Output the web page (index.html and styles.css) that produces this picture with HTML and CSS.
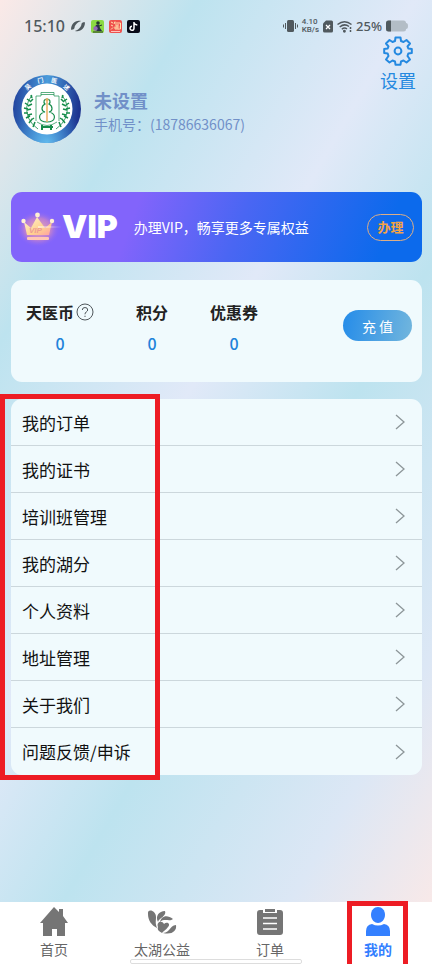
FILE: index.html
```html
<!DOCTYPE html>
<html lang="zh-CN">
<head>
<meta charset="utf-8">
<meta name="viewport" content="width=device-width, initial-scale=1">
<title>我的</title>
<link rel="stylesheet" href="styles.css">
</head>
<body>
<header class="status">
  <div class="status-group">
    <span class="time">15:10</span>
    <svg class="swirl" width="14" height="14" viewBox="0 0 14 14" fill="#50595e"><g transform="rotate(12 7 7)"><path d="M1 12C-.5 7 3 1 9 1.500C6 3 3.500 7 4 9.500C4.200 11 2.500 12 1 12Z"/><path d="M13 2C14.500 7 11 13 5 12.500C8 11 10.500 7 10 4.500C9.800 3 11.500 2 13 2Z"/></g></svg>
    <svg width="13" height="13" viewBox="0 0 13 13"><rect width="13" height="13" rx="2" fill="#8bd943"/><circle cx="7" cy="3" r="1.800" fill="#24352f"/><path d="M5 5L8 4.500L9 8L11 11H6L3 9Z" fill="#283049"/><circle cx="4.500" cy="8.500" r="2.200" fill="#9468b6"/><path d="M2 12H12M8 6L11 5" stroke="#28382b"/></svg>
    <svg width="13" height="13" viewBox="0 0 13 13"><rect width="13" height="13" rx="2" fill="#ef514e"/><path d="M2 2L4 3M2 5L4 6M2 9.500L4 7.500M6 1.500L5 4M5.500 3H11.500V9H9.500M6 5H10M5.500 7H10.500M8 5V9M6 7V9H10" fill="none" stroke="#ffe0ad"/><path d="M2 11.500H11" stroke="#ffc4bd"/></svg>
    <svg width="13" height="13" viewBox="0 0 13 13"><rect width="13" height="13" rx="2" fill="#080b18"/><path d="M7 2V8.200A2 2 0 1 1 5 6.300M7 2C7.200 4 8.500 4.900 10.300 5" fill="none" stroke="#fff" stroke-width="1.500"/></svg>
  </div>
  <div class="status-group status-right">
    <svg width="15" height="14" viewBox="0 0 15 14"><rect x="4" y="1" width="7" height="12" rx="1.500" fill="#50595e"/><path d="M2.500 4V10M.5 5.500V8.500M12.500 4V10M14.500 5.500V8.500" stroke="#50595e"/></svg>
    <span class="speed"><span>4.10</span><span>KB/s</span></span>
    <svg width="10" height="13" viewBox="0 0 10 13"><path d="M3 .5H8.500Q10 .5 10 2V11Q10 12.500 8.500 12.500H1.500Q0 12.500 0 11V3.500Z" fill="#50595e"/><path d="M3 5L7 9M7 5L3 9" stroke="#fff" stroke-width="1.300"/></svg>
    <svg width="15" height="13" viewBox="0 0 15 13" fill="none" stroke="#50595e" stroke-width="1.500"><path d="M.5 4.500Q7.500-1 14.500 4.500M2.700 7Q7.500 3 12 6.500M4.800 9.300Q7.500 7 10 9"/><circle cx="7.400" cy="11.300" r=".7" fill="#50595e"/><path d="M13.500 7V9M13.500 10V12"/></svg>
    <span class="battery-text">25%</span>
    <svg width="22" height="12" viewBox="0 0 22 12"><rect y=".5" width="20" height="11" rx="2.500" fill="#b3bdc6"/><path d="M5 .5H2.500Q0 .5 0 3V9Q0 11.500 2.500 11.500H5Z" fill="#50595e"/><path d="M20 3Q22 3 22 6Q22 9 20 9Z" fill="#b3bdc6"/></svg>
  </div>
</header>

<main class="content">
  <section class="profile">
    <svg class="avatar" width="68" height="68" viewBox="0 0 68 68" role="img" aria-label="头像">
      <defs>
        <linearGradient id="ring" x1="0" y1=".1" x2="1" y2=".2"><stop offset="0" stop-color="#203f9b"/><stop offset=".5" stop-color="#4a9cdb"/><stop offset="1" stop-color="#1d3490"/></linearGradient>
        <radialGradient id="shine" cx=".5" cy="1" r=".55"><stop stop-color="#62baed"/><stop offset="1" stop-color="#3477c8" stop-opacity="0"/></radialGradient>
        <path id="arc" d="M7 34A27 27 0 0 1 61 34"/>
      </defs>
      <circle cx="34" cy="34" r="34" fill="url(#ring)"/><circle cx="34" cy="34" r="34" fill="url(#shine)"/>
      <circle cx="34" cy="34" r="25.500" fill="#fff"/>
      <text class="seal-text"><textPath href="#arc" startOffset="20">吴</textPath></text>
      <text class="seal-text"><textPath href="#arc" startOffset="33">门</textPath></text>
      <text class="seal-text"><textPath href="#arc" startOffset="46">医</textPath></text>
      <text class="seal-text"><textPath href="#arc" startOffset="59">述</textPath></text>
      <g fill="none" stroke="#168c4b">
        <path stroke-width=".7" d="M23 46V21H28V17.500H41V21H46V46M28 19.500H41M24 47Q34 54 44 47"/>
        <path stroke-width="1.200" d="M34 24C31 24 30 27 32 29C28 31 28 36 32 37C24 39 25 47 34 47C43 47 44 39 36 37C40 36 40 31 36 29C38 27 37 24 34 24Z"/>
        <path stroke-width="2" d="M28 52H40M29 50V55M38 50V55"/>
        <path stroke-width=".8" d="M19 20Q10 32 16 44Q19 50 25 54M49 20Q58 32 52 44Q49 50 43 54"/>
        <path stroke-width="1.500" d="M18 20L19 23M14 24L17 26M12 28L15 30M11 33L15 34M11 38L15 38M13 43L17 41M16 48L19 44M20 52L22 47M20 24L17 27M19 29L15 31M18 34L14 35M19 39L15 40M21 43L18 45M50 20L49 23M54 24L51 26M56 28L53 30M57 33L53 34M57 38L53 38M55 43L51 41M52 48L49 44M48 52L46 47M48 24L51 27M49 29L53 31M50 34L54 35M49 39L53 40M47 43L50 45"/>
      </g>
      <path d="M34 23V47M32.500 25H35.500" stroke="#e9ad62" stroke-width="1.500"/>
    </svg>
    <div class="identity">
      <h1>未设置</h1>
      <p>手机号：(18786636067)</p>
    </div>
    <button class="settings" type="button">
      <svg width="30" height="30" viewBox="0 0 30 30" fill="none" stroke="#2589e0" stroke-width="2" stroke-linejoin="round"><path d="M12.500 1.500H17.500L18 5L20.500 6L23.500 4L27 7.500L24.500 10.500L25.300 12.500L28.800 13V17L25.300 17.500L24.500 20L27 23.500L23.500 26.500L20.500 24.500L18 25.500L17.500 28.700H12.500L12 25.500L9.500 24.500L6.500 26.500L3 23.500L5.500 20L4.700 17.500L1.200 17V13L4.700 12.500L5.500 10.500L3 7.500L6.500 4L9.500 6L12 5Z"/><circle cx="15" cy="15" r="3.400"/></svg>
      <span>设置</span>
    </button>
  </section>

  <section class="vip">
    <svg class="crown" width="46" height="40" viewBox="0 0 46 40">
      <defs><radialGradient id="glow"><stop stop-color="#ffc29a" stop-opacity=".9"/><stop offset=".6" stop-color="#e993b5" stop-opacity=".55"/><stop offset="1" stop-color="#8668fa" stop-opacity="0"/></radialGradient><linearGradient id="gold" x2="1" y2="1"><stop stop-color="#fff3d5"/><stop offset=".6" stop-color="#ffd28f"/><stop offset="1" stop-color="#ff9fa5"/></linearGradient></defs>
      <ellipse cx="22" cy="22" rx="22" ry="18" fill="url(#glow)"/>
      <path d="M8 15L15 21L21 10L29 21L36 15L33 28H11Z" fill="url(#gold)"/><rect x="11" y="30" width="22" height="3" rx="1" fill="#ffc7b5"/>
      <g fill="#fff0d2"><circle cx="7.500" cy="14" r="2.200"/><circle cx="21.500" cy="8" r="2.400"/><circle cx="36" cy="14" r="2.200"/></g>
      <text class="crown-text" x="13" y="26">VIP</text>
      <path d="M22 19.500L46 20L22 20.500Z" fill="#fff"/>
    </svg>
    <strong class="vip-mark">VIP</strong>
    <span class="vip-copy">办理VIP，畅享更多专属权益</span>
    <button class="apply" type="button">办理</button>
  </section>

  <section class="wallet">
    <dl class="balances">
      <div><dt>天医币<svg width="18" height="18" viewBox="0 0 18 18" fill="none" stroke="#50575b"><circle cx="9" cy="9" r="8"/><path d="M6.300 7Q6.300 4.500 9 4.500Q11.700 4.500 11.700 7Q11.700 8 10.200 9Q9 9.800 9 11.300M9 12.700V14"/></svg></dt><dd>0</dd></div>
      <div><dt>积分</dt><dd>0</dd></div>
      <div><dt>优惠券</dt><dd>0</dd></div>
    </dl>
    <button class="recharge" type="button">充 值</button>
  </section>

  <div class="menu-area">
    <nav class="menu" aria-label="个人中心">
      <a href="#orders">我的订单<svg class="chevron" viewBox="0 0 10 16"><path d="M1 1L9 8L1 15"/></svg></a>
      <a href="#certificates">我的证书<svg class="chevron" viewBox="0 0 10 16"><path d="M1 1L9 8L1 15"/></svg></a>
      <a href="#classes">培训班管理<svg class="chevron" viewBox="0 0 10 16"><path d="M1 1L9 8L1 15"/></svg></a>
      <a href="#points">我的湖分<svg class="chevron" viewBox="0 0 10 16"><path d="M1 1L9 8L1 15"/></svg></a>
      <a href="#profile">个人资料<svg class="chevron" viewBox="0 0 10 16"><path d="M1 1L9 8L1 15"/></svg></a>
      <a href="#address">地址管理<svg class="chevron" viewBox="0 0 10 16"><path d="M1 1L9 8L1 15"/></svg></a>
      <a href="#about">关于我们<svg class="chevron" viewBox="0 0 10 16"><path d="M1 1L9 8L1 15"/></svg></a>
      <a href="#feedback">问题反馈/申诉<svg class="chevron" viewBox="0 0 10 16"><path d="M1 1L9 8L1 15"/></svg></a>
    </nav>
    <div class="marker marker-menu"></div>
  </div>
</main>

<nav class="tabs" aria-label="主导航">
  <a href="#home"><svg width="30" height="30" viewBox="0 0 30 30" fill="#757575"><path d="M15 0L20 5V2H24V9L29 16H26V29H18V22H13V29H4V16H1Z"/></svg><span>首页</span></a>
  <a href="#charity"><svg width="30" height="30" viewBox="0 0 30 30" fill="#757575"><path d="M1 7C0 1 9 3 9 10C9 15 8 15 10 21C4 18 1 13 1 7Z"/><path d="M11 15C8 9 12 4 18 4C20 9 12 11 11 15Z"/><path d="M13 15C14 9 20 7 26 12C23 15 17 11 13 15Z"/><path d="M11 20C9 15 15 13 17 17C20 14 24 17 21 20C19 23 16 24 15 26C12 24 10 23 11 20Z"/><path d="M29 18C30 24 25 28 16 26C24 25 22 19 29 18Z"/></svg><span>太湖公益</span></a>
  <a href="#order-list"><svg width="30" height="30" viewBox="0 0 30 30"><path d="M5 3H8V6H22V3H25Q28 3 28 6V25Q28 28 25 28H5Q2 28 2 25V6Q2 3 5 3Z" fill="#757575"/><path d="M10 2H20V5H10Z" fill="#757575"/><path d="M8 11H22M8 16.500H22M8 22H22" stroke="#fff" stroke-width="1.500"/></svg><span>订单</span></a>
  <a class="active" href="#me" aria-current="page"><svg width="30" height="30" viewBox="0 0 30 30" fill="#3480ff"><path d="M15 0C19 0 22 3 22 8C22 13 18 16 15 16C12 16 8 13 8 8C8 3 11 0 15 0Z"/><path d="M3 29V24Q3 18 9 17Q15 20 21 17Q27 18 27 24V29Z"/></svg><span>我的</span><i class="marker marker-tab"></i></a>
  <div class="home-indicator"></div>
</nav>
</body>
</html>
```

FILE: styles.css
```css
* { box-sizing: border-box; }

body {
  margin: 0;
  min-height: 100vh;
  display: flex;
  flex-direction: column;
  overflow-x: hidden;
  font-family: "Noto Sans CJK SC", sans-serif;
  color: #111;
  background: linear-gradient(120deg, #fbe9e7 0%, #bde3ef 20%, #e1e9f8 42%, #bde3ef 59%, #dce7f5 82%, #fbe9e7 98%);
}

button { font: inherit; padding: 0; border: 0; background: none; cursor: pointer; }
a { color: inherit; text-decoration: none; }
h1, p, dl, dd { margin: 0; }
svg { flex: none; }

.status {
  height: 36px;
  padding: 16px 24px 0;
  display: flex;
  justify-content: space-between;
  color: #50595e;
}
.status-group { height: 20px; display: flex; align-items: center; gap: 5px; }
.status-right { gap: 4px; }
.time { font: 500 16px/20px "Noto Sans", sans-serif; }
.swirl { margin: 0 1px; }
.speed { display: flex; flex-direction: column; font: 500 8px/8px Roboto, sans-serif; }
.speed span { height: 8px; }
.battery-text { font: 500 13px/20px "Noto Sans", sans-serif; }

.content { flex: 1; padding: 0 10px 0 11px; }

.profile { display: flex; align-items: flex-start; height: 156px; padding: 0 6px 0 2px; }
.avatar { margin-top: 39px; }
.seal-text { font-size: 6px; font-weight: 700; fill: #fff; }
.identity { flex: 1; margin: 52px 0 0 13px; color: #7190c8; }
.identity h1 { font-size: 18px; line-height: 24px; }
.identity p { font-size: 14px; line-height: 24px; }
.settings { display: flex; flex-direction: column; align-items: center; color: #2589e0; font-size: 18px; line-height: 28px; }

.vip {
  height: 70px;
  padding: 0 8px 0 5px;
  display: flex;
  align-items: center;
  border-radius: 11px;
  color: #fff;
  background: linear-gradient(110deg, #8264fb 0%, #8264fb 30%, #4a66f3 55%, #0c6aec 90%);
}
.crown-text { font: italic 700 8px "Liberation Sans", sans-serif; fill: #ed9b96; }
.vip-mark { font: 900 32px/40px Inter, sans-serif; }
.vip-copy { flex: 1; margin-left: 16px; font-size: 14px; }
.apply {
  width: 47px;
  height: 27px;
  border: 1px solid #dcae86;
  border-radius: 14px;
  color: #f5a344;
  font-size: 13px;
  line-height: 24px;
  font-weight: 700;
}

.wallet {
  min-height: 102px;
  margin-top: 18px;
  padding: 20px 10px 20px 15px;
  display: flex;
  justify-content: space-between;
  border-radius: 11px;
  background: #f0fafd;
}
.balances { display: flex; gap: 42px; text-align: center; }
.balances dt { height: 24px; display: flex; align-items: center; justify-content: center; gap: 2px; font-size: 16px; line-height: 22px; font-weight: 700; color: #222; }
.balances dd { margin-top: 7px; font-size: 16px; line-height: 24px; font-weight: 500; color: #2182da; }
.recharge {
  width: 69px;
  height: 31px;
  margin-top: 10px;
  border-radius: 16px;
  color: #fff;
  font-size: 14px;
  background: linear-gradient(100deg, #258ce9, #72b6dd);
}

.menu-area { position: relative; margin-top: 17px; }
.menu { border-radius: 11px; background: #f0fafd; }
.menu a {
  height: 47px;
  padding: 0 17px 0 11px;
  display: flex;
  align-items: center;
  justify-content: space-between;
  font-size: 17px;
  border-bottom: 1px solid #ccd7dc;
}
.menu a:last-child { border-bottom: 0; }
.chevron { width: 10px; height: 16px; fill: none; stroke: #8d9699; stroke-width: 1.3; }

.marker { position: absolute; border: 5px solid #ed1c24; pointer-events: none; }
.marker-menu { top: -5px; bottom: -5px; left: -11px; width: 160px; }
.marker-tab { top: -1px; left: 50%; width: 61px; height: 70px; margin-left: -31px; }

.tabs {
  position: relative;
  height: 62px;
  display: grid;
  grid-template-columns: repeat(4, 1fr);
  overflow: clip;
  overflow-clip-margin: 1px;
  background: #fff;
  color: #666;
}
.tabs a {
  position: relative;
  padding-top: 5px;
  display: flex;
  flex-direction: column;
  align-items: center;
  font-size: 14px;
  line-height: 24px;
}
.tabs .active { color: #3480ff; font-weight: 700; }
.home-indicator {
  position: absolute;
  bottom: 0;
  left: 30%;
  width: 40%;
  height: 5px;
  border: 1px solid #ddd;
  border-radius: 2px;
  background: #fff;
}
```
